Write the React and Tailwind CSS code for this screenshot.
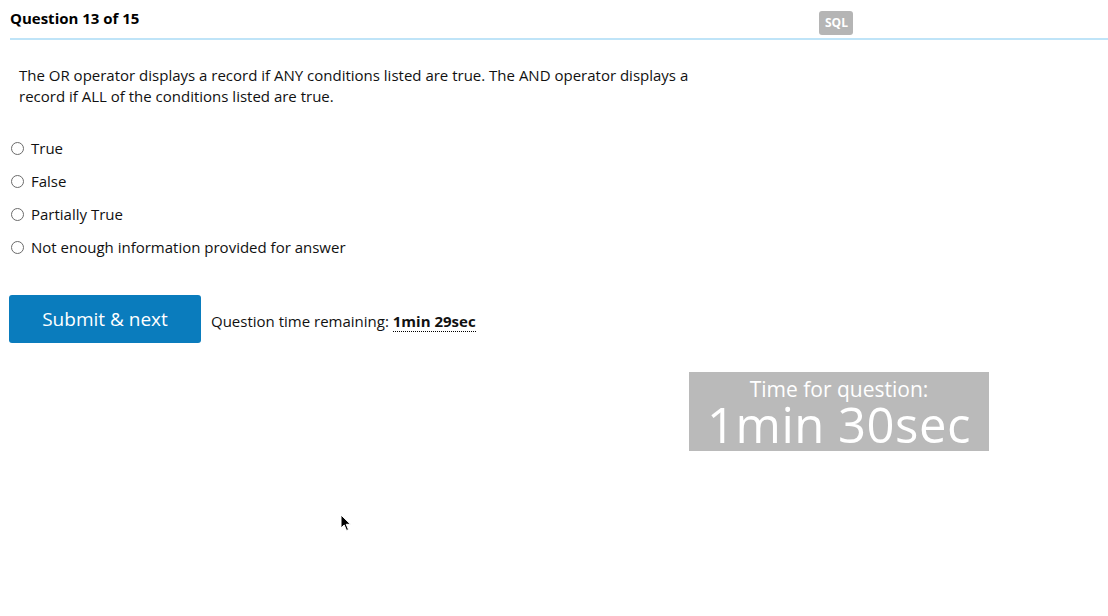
import React from 'react';

const options = ['True', 'False', 'Partially True', 'Not enough information provided for answer'];

function Radio() {
  return <span className="mr-[7px] inline-block h-[13px] w-[13px] shrink-0 rounded-full border border-[#6b6b6b] bg-white" />;
}

export default function App() {
  return (
    <div className="relative h-[616px] w-[1108px] overflow-hidden bg-white font-['Open_Sans',sans-serif] text-[#111]">
      <header className="ml-[10px] flex h-[40px] items-start border-b-2 border-[#bfe4f8]">
        <h2 className="mt-[8px] text-[15px] font-bold leading-[20px] text-black">Question 13 of 15</h2>
        <span className="ml-[680px] mt-[11px] flex h-[24px] w-[34px] items-center justify-center rounded-[3px] bg-[#b5b5b5] text-[12px] font-bold leading-[16px] text-white">SQL</span>
      </header>

      <p className="ml-[19px] mt-[25px] w-[690px] text-[15px] leading-[21px]">
        The OR operator displays a record if ANY conditions listed are true. The AND operator displays a record if ALL of the conditions listed are true.
      </p>

      <ul className="ml-[11px] mt-[31px] flex flex-col gap-[13px]">
        {options.map((o) => (
          <li key={o} className="flex h-[20px] items-center text-[15px] leading-[20px]">
            <Radio />
            {o}
          </li>
        ))}
      </ul>

      <div className="ml-[9px] mt-[38px] flex items-center">
        <button type="button" className="h-[48px] w-[192px] rounded-[3px] bg-[#0a7cbd] text-[19px] text-white">
          Submit &amp; next
        </button>
        <span className="ml-[10px] mt-[4px] text-[15px]">
          Question time remaining:{' '}
          <b className="border-b border-dotted border-black font-bold">1min 29sec</b>
        </span>
      </div>

      <div className="ml-[689px] mt-[29px] flex h-[79px] w-[300px] flex-col items-center bg-[#bababa] text-white">
        <span className="mt-[7px] text-[21px] leading-[20px]">Time for question:</span>
        <span className="text-[49px] font-normal leading-[51px] tracking-[0.5px]">1min 30sec</span>
      </div>

      <svg className="absolute left-[340px] top-[514px]" width="12" height="18" viewBox="0 0 12 18">
        <path d="M1 1 L1 14 L4.2 11 L6.5 16.5 L8.5 15.6 L6.2 10.3 L10.5 10.3 Z" fill="#000" stroke="#fff" strokeWidth="1" />
      </svg>
    </div>
  );
}
